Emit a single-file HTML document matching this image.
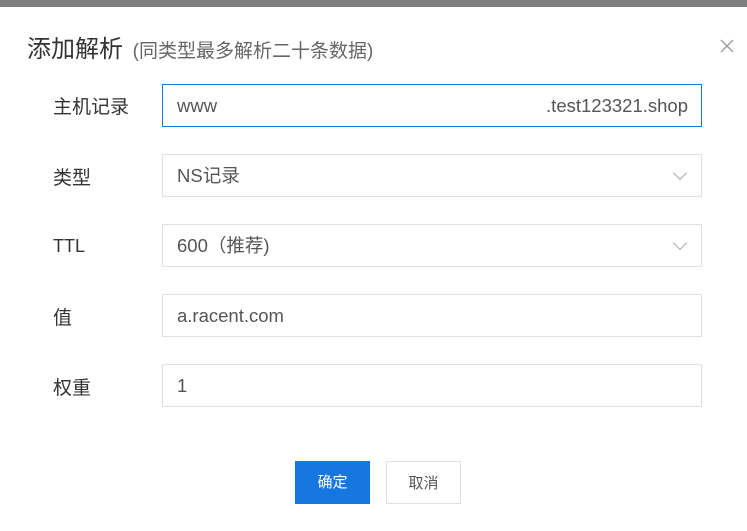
<!DOCTYPE html><html><head><meta charset="utf-8"><style>
body{margin:0;width:747px;height:531px;background:#fff;position:relative;overflow:hidden;font-family:"Liberation Sans","Noto Sans CJK SC",sans-serif;}
.top{position:absolute;left:0;top:0;width:747px;height:7px;background:#7f7f7f}
.t{position:absolute;left:27px;top:29px;font-size:24px;color:#333;white-space:nowrap}
.t span{font-size:19px;color:#666;margin-left:3px}
.lbl{position:absolute;left:53px;font-size:19px;color:#333}
.in{position:absolute;left:162px;width:538px;height:41px;border:1px solid #dcdfe6;box-sizing:content-box;font-size:18.5px;color:#555;line-height:41px;text-indent:14px}
.ar{position:absolute;right:16px;top:13px;width:9px;height:9px;border-right:1px solid #aaa;border-bottom:1px solid #aaa;transform:rotate(45deg)}
.btn{position:absolute;top:461px;height:43px;width:75px;font-size:15px;line-height:43px;text-align:center;box-sizing:border-box}
</style></head><body>
<div class="top"></div>
<div class="t">添加解析 <span>(同类型最多解析二十条数据)</span></div>
<svg style="position:absolute;left:720px;top:39px" width="14" height="14"><path d="M1 1L13 13M13 1L1 13" stroke="#999" stroke-width="1.3"/></svg>
<div class="lbl" style="top:92px">主机记录</div>
<div class="in" style="top:84px;border-color:#1677e0;height:41px"><span>www</span><span style="position:absolute;right:13px;text-indent:0">.test123321.shop</span></div>
<div class="lbl" style="top:163px">类型</div>
<div class="in" style="top:154px">NS记录<div class="ar"></div></div>
<div class="lbl" style="top:236px;font-size:18px">TTL</div>
<div class="in" style="top:224px">600（推荐)<div class="ar"></div></div>
<div class="lbl" style="top:303px">值</div>
<div class="in" style="top:294px">a.racent.com</div>
<div class="lbl" style="top:373px">权重</div>
<div class="in" style="top:364px">1</div>
<div class="btn" style="left:295px;background:#1677e0;color:#fff">确定</div>
<div class="btn" style="left:386px;border:1px solid #dcdfe6;color:#555">取消</div>
</body></html>
